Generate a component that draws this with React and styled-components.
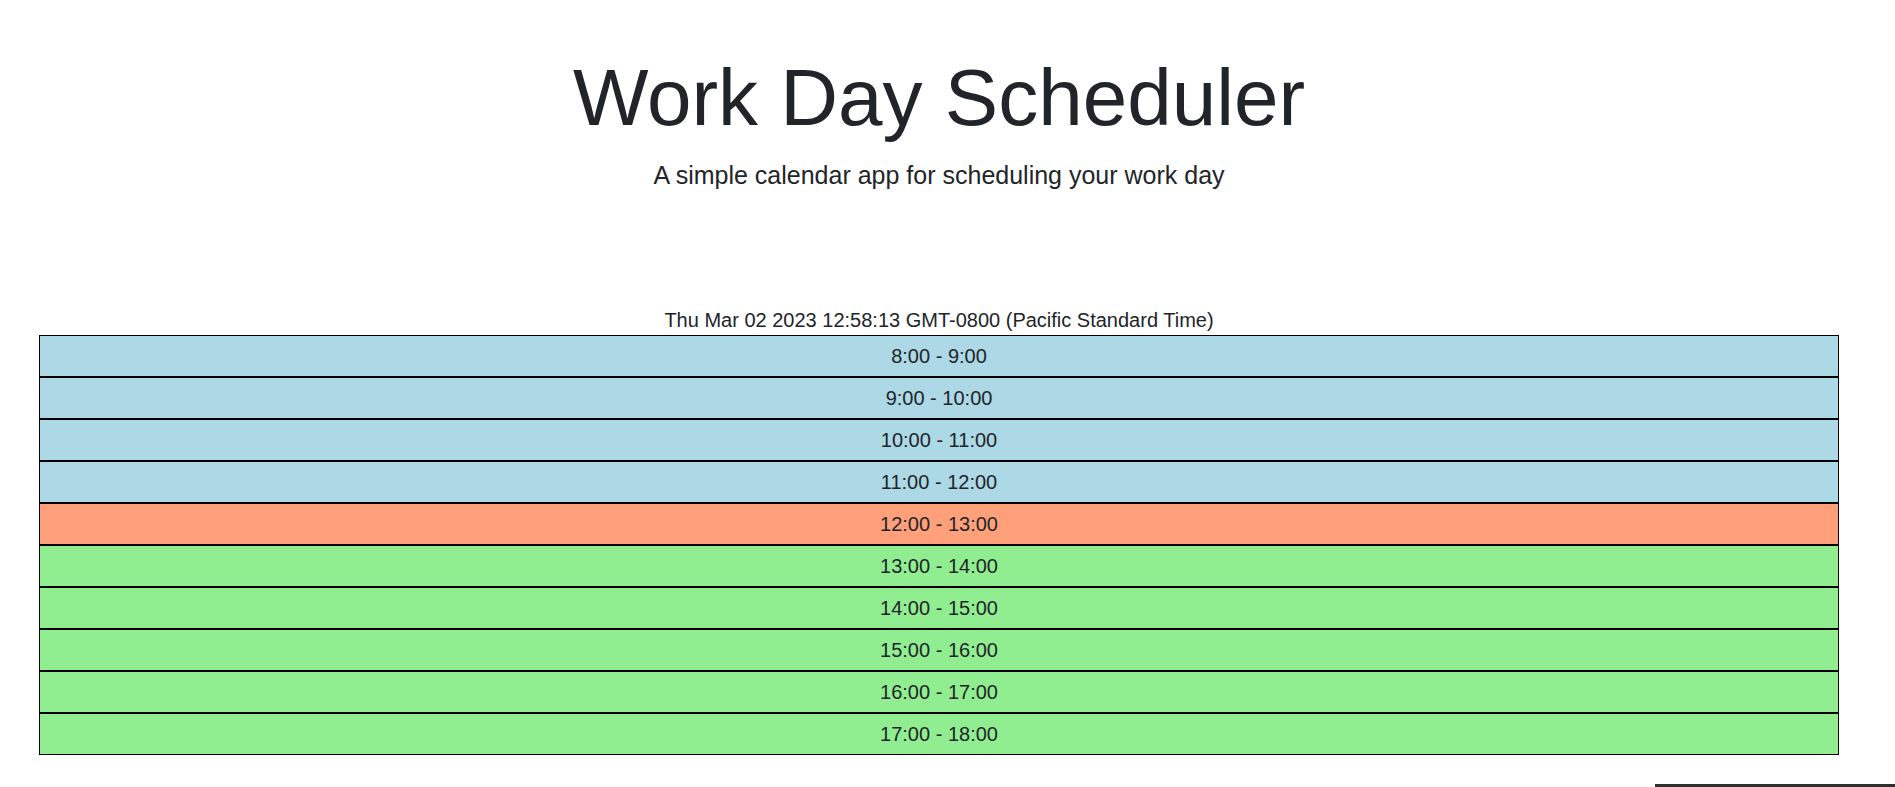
import React from "react";
import styled, { createGlobalStyle } from "styled-components";

const GlobalStyle = createGlobalStyle`
  html, body {
    margin: 0;
    padding: 0;
    overflow: hidden;
    background: #ffffff;
  }
  body {
    font-family: "Liberation Sans", Arial, sans-serif;
    color: #212529;
  }
  * { box-sizing: border-box; }
`;

const Page = styled.div`
  width: 100%;
  padding-right: 17px;
  display: flex;
  flex-direction: column;
  align-items: center;
`;

const Header = styled.header`
  display: flex;
  flex-direction: column;
  align-items: center;
  padding-top: 50px;
  margin-bottom: 110px;
`;

const Title = styled.h1`
  margin: 0;
  font-size: 80px;
  font-weight: 400;
  line-height: 1.2;
  color: #212529;
`;

const Lead = styled.p`
  margin: 11px 0 0;
  font-size: 25px;
  font-weight: 400;
  line-height: 1.5;
  color: #212529;
`;

const Schedule = styled.section`
  width: 1800px;
  display: flex;
  flex-direction: column;
`;

const CurrentDay = styled.p`
  margin: 0;
  font-size: 20px;
  line-height: 30px;
  text-align: center;
  color: #212529;
`;

const colors = {
  past: "#add8e6",
  present: "#ffa07a",
  future: "#90ee90",
};

const HourRow = styled.div`
  height: 42px;
  padding-top: 1px;
  border: 1px solid #000000;
  background: ${(p) => colors[p.$state]};
  display: flex;
  align-items: center;
  justify-content: center;
  font-size: 20px;
  color: #212529;
`;

const Footer = styled.div`
  width: 100%;
  display: flex;
  justify-content: flex-end;
  margin-top: 29px;
`;

const DarkBar = styled.div`
  width: 240px;
  height: 40px;
  margin-right: -17px;
  background: #2f2f2f;
`;

const hours = [8, 9, 10, 11, 12, 13, 14, 15, 16, 17];
const currentHour = 12;

export default function App() {
  return (
    <>
      <GlobalStyle />
      <Page>
        <Header>
          <Title>Work Day Scheduler</Title>
          <Lead>A simple calendar app for scheduling your work day</Lead>
        </Header>
        <Schedule>
          <CurrentDay>Thu Mar 02 2023 12:58:13 GMT-0800 (Pacific Standard Time)</CurrentDay>
          {hours.map((h) => (
            <HourRow
              key={h}
              $state={h < currentHour ? "past" : h === currentHour ? "present" : "future"}
            >
              {`${h}:00 - ${h + 1}:00`}
            </HourRow>
          ))}
        </Schedule>
        <Footer>
          <DarkBar />
        </Footer>
      </Page>
    </>
  );
}
